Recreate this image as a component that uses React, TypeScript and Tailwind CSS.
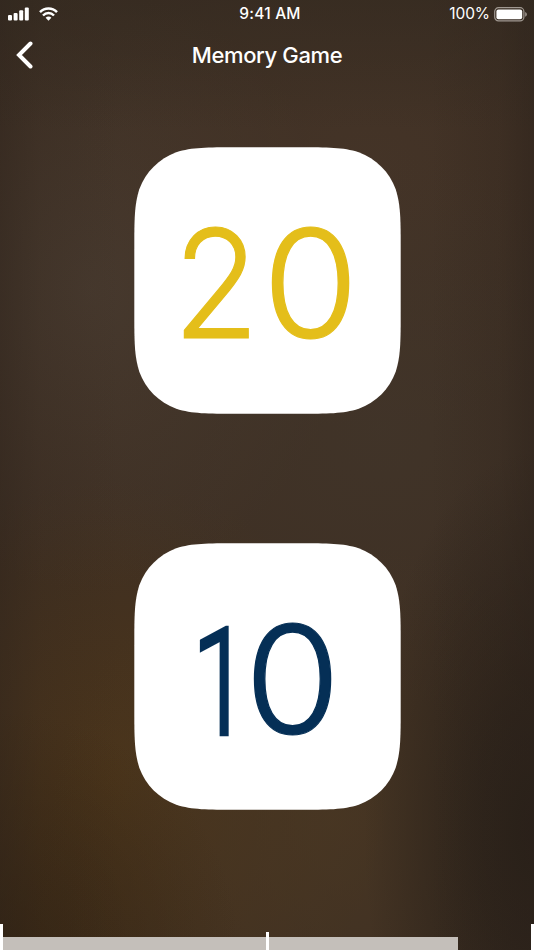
const GRADIENTS = [
  "bg-[radial-gradient(ellipse_280px_300px_at_110px_780px,#4d3518d9,#4d351800)]",
  "bg-[radial-gradient(ellipse_260px_300px_at_90px_290px,#4a3d32b3,#4a3d3200)]",
  "bg-[radial-gradient(ellipse_300px_260px_at_370px_170px,#48372a99,#48372a00)]",
  "bg-[radial-gradient(ellipse_300px_280px_at_380px_430px,#42372c99,#42372c00)]",
  "bg-[radial-gradient(ellipse_280px_280px_at_330px_820px,#4a3823b3,#4a382300)]",
  "bg-[radial-gradient(ellipse_170px_380px_at_534px_830px,#271f18f2,#271f18b3_35%,#271f1800)]",
  "bg-[radial-gradient(ellipse_240px_240px_at_0px_950px,#32220fb3,#32220f00)]",
  "bg-[linear-gradient(90deg,#2b211a66,#2b211a26_40px,#2b211a00_120px,#2b211a00_430px,#2b211a33_500px,#2b211a80)]",
  "bg-[linear-gradient(180deg,#30281f80,#30281f00_130px)]",
];

function StatusBar() {
  return (
    <div className="flex h-7 items-center pr-[6px] pl-2">
      <div className="flex flex-1 items-center gap-[10px]">
        <svg width="21" height="14" viewBox="0 0 21 14" fill="white">
          <rect x="0" y="8" width="4" height="5.5" rx="1.1" />
          <rect x="5.6" y="6" width="4" height="7.5" rx="1.1" />
          <rect x="11.2" y="3.2" width="4" height="10.3" rx="1.1" />
          <rect x="16.8" y="0.5" width="4" height="13" rx="1.1" />
        </svg>
        <svg width="19" height="14" viewBox="0 0 19 14" fill="none" stroke="white" strokeWidth="2.5">
          <path d="M1 5.2C5.8.3 13.2.3 18 5.2" />
          <path d="M4 8.5c3.1-3.2 7.9-3.2 11 0" />
          <path d="M6.6 10.7c1.6-1.6 4.2-1.6 5.8 0L9.5 13.7Z" fill="white" stroke="none" />
        </svg>
      </div>
      <span className="pl-1 text-[15.5px] leading-5 font-medium tracking-[0.2px]">9:41 AM</span>
      <div className="flex flex-1 items-center justify-end gap-1">
        <span className="text-[15.5px] leading-5 tracking-[-0.1px]">100%</span>
        <svg width="34" height="15" viewBox="0 0 34 15">
          <rect x="0.7" y="0.7" width="29.2" height="13.2" rx="3.8" fill="none" stroke="#a09891" strokeWidth="1.2" />
          <rect x="2.4" y="2.4" width="25.8" height="9.8" rx="2" fill="white" />
          <path d="M31.2 5v4.7c2.2-.8 2.2-3.9 0-4.7Z" fill="#a09891" />
        </svg>
      </div>
    </div>
  );
}

// Per-digit width and weight adjustments for the large card numerals.
const DIGIT_STYLES: Record<string, string> = {
  "0": "scale-x-[1.03] [-webkit-text-stroke:1.2px_currentColor]",
  "1": "-mr-[3px] origin-right scale-x-[0.69] font-['Roboto'] text-[148px] [-webkit-text-stroke:4.5px_currentColor]",
  "2": "-mr-[2px] origin-left scale-x-[0.93] [-webkit-text-stroke:1.2px_currentColor]",
};

function Card({ value, className }: { value: string; className: string }) {
  return (
    <div className="relative flex h-[267px] w-[267px] items-center justify-center">
      <svg className="absolute inset-0" width="267" height="267" viewBox="0 0 267 267" fill="white">
        <path d="M102.5 .3C73 .3 58.2 .3 42.3 5.3C25 11.6 11.6 25 5.3 42.3C.3 58.2 .3 73 .3 102.5V164.5C.3 194 .3 208.8 5.3 224.7C11.6 242 25 255.4 42.3 261.7C58.2 266.7 73 266.7 102.5 266.7H164.5C194 266.7 208.8 266.7 224.7 261.7C242 255.4 255.4 242 261.7 224.7C266.7 208.8 266.7 194 266.7 164.5V102.5C266.7 73 266.7 58.2 261.7 42.3C255.4 25 242 11.6 224.7 5.3C208.8 .3 194 .3 164.5 .3Z" />
      </svg>
      <div className={`relative flex items-baseline text-[151px] leading-none font-light ${className}`}>
        {value.split("").map((d, i) => (
          <span key={i} className={`block ${DIGIT_STYLES[d]}`}>{d}</span>
        ))}
      </div>
    </div>
  );
}

export default function App() {
  return (
    <div className="relative flex h-[950px] w-[534px] flex-col overflow-hidden bg-[#3e2f23] font-['Inter','Liberation_Sans',sans-serif] text-white">
      {GRADIENTS.map((g) => (
        <div key={g} className={`absolute inset-0 ${g}`} />
      ))}
      <div className="relative flex flex-1 flex-col">
        <StatusBar />
        <header className="grid h-[54px] grid-cols-[60px_1fr_60px] items-center">
          <svg className="ml-4" width="18" height="28" viewBox="0 0 18 28" fill="none" stroke="white" strokeWidth="4" strokeLinecap="round" strokeLinejoin="miter">
            <path d="M14.5 2.5L3 14L14.5 25.5" />
          </svg>
          <h1 className="text-center text-[22px] leading-7 font-medium tracking-[-0.38px]">Memory Game</h1>
        </header>
        <main className="flex flex-1 flex-col items-center gap-[129px] pt-[65px]">
          <Card value="20" className="pt-[6px] pr-[4px] text-[#e4be1a]" />
          <Card value="10" className="pt-[9px] pr-[28px] text-[#052f56]" />
        </main>
        <footer className="flex h-[26px] items-end">
          <div className="h-[26px] w-[3px] bg-white" />
          <div className="h-[13px] w-[262.5px] bg-[#c4bfba]" />
          <div className="h-[18px] w-[3px] bg-white" />
          <div className="h-[13px] w-[189.5px] bg-[#c4bfba]" />
          <div className="ml-auto h-[26px] w-[3px] bg-white" />
        </footer>
      </div>
    </div>
  );
}
